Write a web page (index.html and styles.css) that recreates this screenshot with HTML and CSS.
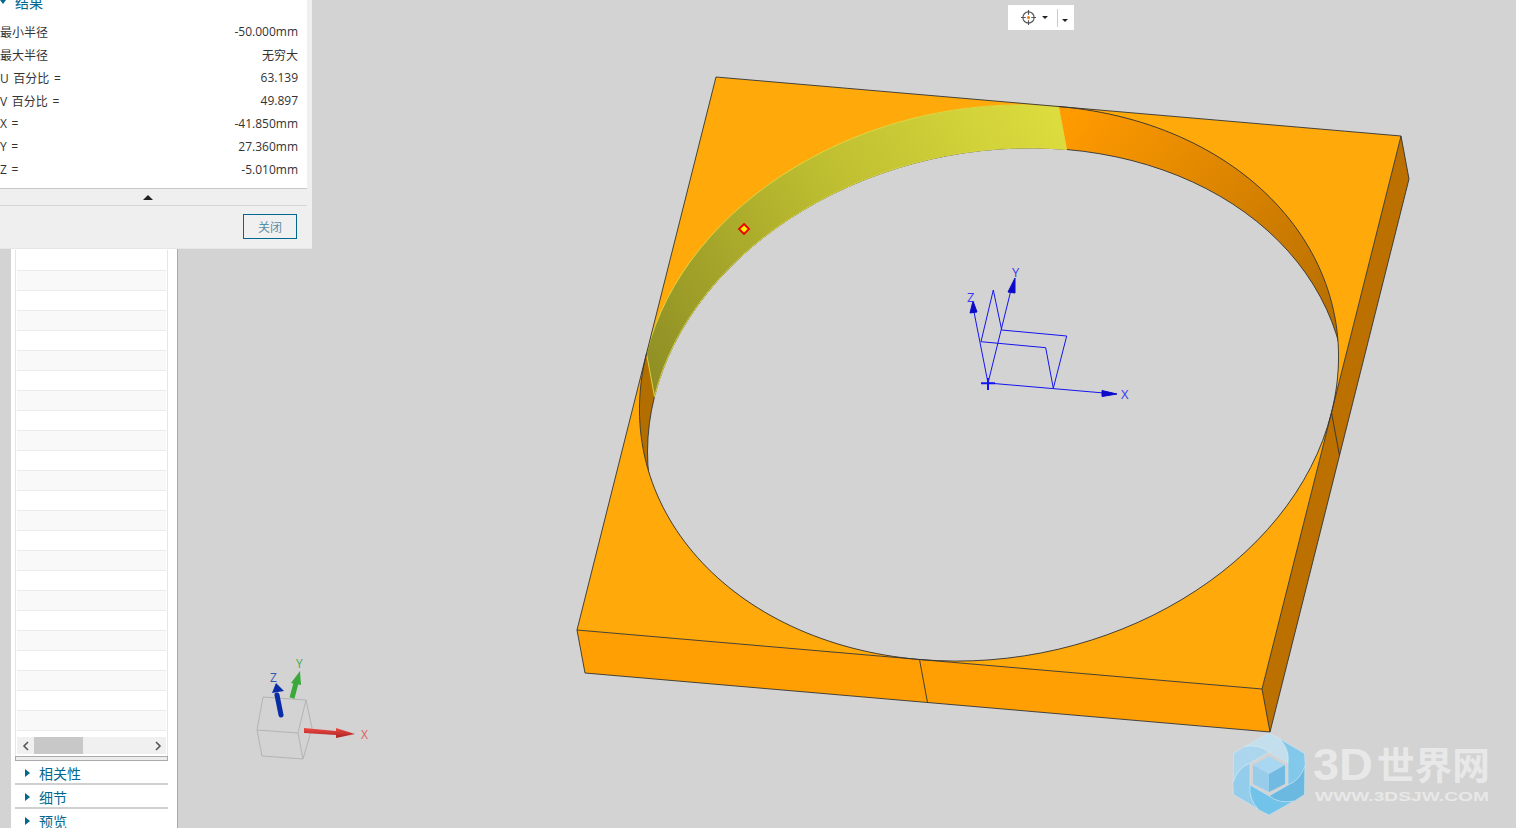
FILE: index.html
```html
<!DOCTYPE html>
<html>
<head>
<meta charset="utf-8"/>
<title>测量</title>
<link rel="stylesheet" href="styles.css">
</head>

<body>
<div class="app">

<div class="side-gutter">
<div class="side">
  <div class="list">
    <div class="rows">
      <div class="row"></div><div class="row alt"></div><div class="row"></div><div class="row alt"></div>
      <div class="row"></div><div class="row alt"></div><div class="row"></div><div class="row alt"></div>
      <div class="row"></div><div class="row alt"></div><div class="row"></div><div class="row alt"></div>
      <div class="row"></div><div class="row alt"></div><div class="row"></div><div class="row alt"></div>
      <div class="row"></div><div class="row alt"></div><div class="row"></div><div class="row alt"></div>
      <div class="row"></div><div class="row alt"></div><div class="row"></div><div class="row alt"></div>
    </div>
    <div class="hscroll">
      <svg class="chev" viewBox="0 0 8 10"><path d="M6 1 2 5l4 4"/></svg>
      <div class="track"><div class="thumb"></div></div>
      <svg class="chev" viewBox="0 0 8 10"><path d="M2 1l4 4-4 4"/></svg>
    </div>
  </div>
  <div class="sash"></div>
  <div class="section"><span class="tri-right"></span>相关性</div>
  <div class="section"><span class="tri-right"></span>细节</div>
  <div class="section"><span class="tri-right"></span>预览</div>
</div>
</div>

<div class="view">
  <div class="toolbar">
    <svg class="target" viewBox="0 0 16 16">
      <circle cx="8" cy="8" r="6"/>
      <path d="M8 0v5M8 11v5M0 8h5M11 8h5"/>
      <circle class="dot" cx="8" cy="8" r="1.6"/>
    </svg>
    <span class="tri-down"></span>
    <span class="tool-sep"></span>
    <span class="tri-down low"></span>
  </div>

  <svg class="scene" viewBox="178 0 1338 828">
    <defs>
      <linearGradient id="wallYellow" gradientUnits="userSpaceOnUse" x1="1060" y1="125" x2="650" y2="375">
        <stop offset="0" stop-color="#dcdc3e"/>
        <stop offset="0.5" stop-color="#bcbc30"/>
        <stop offset="1" stop-color="#8f8f25"/>
      </linearGradient>
      <linearGradient id="wallOrange" gradientUnits="userSpaceOnUse" x1="1065" y1="125" x2="1335" y2="330">
        <stop offset="0" stop-color="#ff9a00"/>
        <stop offset="1" stop-color="#b66e00"/>
      </linearGradient>
      <linearGradient id="redArrow" x1="0" y1="0" x2="0" y2="1">
        <stop offset="0" stop-color="#ee4a44"/>
        <stop offset="1" stop-color="#a82222"/>
      </linearGradient>
      <clipPath id="rimClip">
        <circle r="1" transform="matrix(342.5 29.5 -69.5 276.5 989 383)"/>
      </clipPath>
      <path id="blade" d="M-24.8-27 0-41 11-35.4Q21-24 19-11L0-22Q-10.3-30.2-24.8-27Z"/>
    </defs>

    <!-- plate -->
    <polygon class="face-front" points="577,630 1262,689 1270,732 585,673"/>
    <polygon class="face-right" points="1401,136 1409,179 1270,732 1262,689"/>
    <polygon class="face-top" points="716,77 1401,136 1262,689 577,630"/>

    <!-- hole: far wall shows between the two rims -->
    <circle class="wall-dark" r="1" transform="matrix(342.5 29.5 -69.5 276.5 989 383)"/>
    <g clip-path="url(#rimClip)">
      <path class="wall-orange" d="M1058.5 106.5C1247.66 122.79 1369.88 259.79 1331.5 412.5L1339.5 455.5C1377.88 302.79 1255.66 165.79 1066.5 149.5Z"/>
      <circle class="hole" r="1" transform="matrix(342.5 29.5 -69.5 276.5 997 426)"/>
      <circle class="rim-line" r="1" transform="matrix(342.5 29.5 -69.5 276.5 997 426)"/>
    </g>
    <path class="wall-yellow" d="M1058.5 106.5C869.34 90.21 684.88 200.79 646.5 353.5L654.5 396.5C692.88 243.79 877.34 133.21 1066.5 149.5Z"/>
    <path class="edge" d="M1058.5 106.5C1247.66 122.79 1369.88 259.79 1331.5 412.5C1293.12 565.21 1108.66 675.79 919.5 659.5C730.34 643.21 608.12 506.21 646.5 353.5"/>
    <path class="edge" d="M919.5 659.5 927.5 702.5M1331.5 412.5 1339.5 455.5"/>
    <path class="edge" d="M716 77 1401 136 1262 689 577 630ZM577 630 585 673 1270 732 1262 689M1401 136 1409 179 1270 732"/>

    <!-- picked point -->
    <polygon class="pick" points="744,224 749,229 744,234 739,229"/>

    <!-- sketch csys -->
    <g class="sketch">
      <path d="M988 383 1104 393M988 383 1011 290M988 383 974 312"/>
      <path d="M981 341.7 993.3 290 1001.7 330 1066.7 336 1053.3 388.3 1045.7 347.7Z"/>
      <path class="plus" d="M981 383.3h14M988 378v12"/>
      <path class="head" d="M1102 390.5 1117 394 1102 396.5ZM1008 292 1015 278 1015 293ZM970 313 973 301 977 312Z"/>
    </g>
    <text class="sketch-label" x="1121" y="399">X</text>
    <text class="sketch-label" x="1012" y="277">Y</text>
    <text class="sketch-label" x="967" y="302">Z</text>

    <!-- view triad -->
    <path class="cube" d="M257 730 263 697 306 700 312 728 303 759 262 756ZM257 730 298 733 306 700M298 733 303 759"/>
    <path class="axis-z" d="M281 715 277 695"/>
    <polygon class="axis-z-head" points="272,693 276,683 284,691"/>
    <path class="axis-y" d="M292 698 296 683"/>
    <polygon class="axis-y-head" points="291,683 300,671 301,685"/>
    <polygon points="304,728 336,731 336,728 355,734 336,738 336,735 304,733" fill="url(#redArrow)"/>
    <text class="triad x" x="361" y="739">X</text>
    <text class="triad y" x="296" y="668">Y</text>
    <text class="triad z" x="270" y="682">Z</text>

    <!-- watermark -->
    <g transform="translate(1269 774)">
      <use href="#blade" class="blade b1"/>
      <use href="#blade" class="blade b2" transform="rotate(60)"/>
      <use href="#blade" class="blade b3" transform="rotate(120)"/>
      <use href="#blade" class="blade b4" transform="rotate(180)"/>
      <use href="#blade" class="blade b5" transform="rotate(240)"/>
      <use href="#blade" class="blade b6" transform="rotate(300)"/>
      <polygon fill="#a9d6f0" points="0,-18 16,-9 0,0 -16,-9"/>
      <polygon fill="#97cdea" points="-16,-9 0,0 0,18 -16,10"/>
      <polygon fill="#71bbe3" points="16,-9 0,0 0,18 16,10"/>
    </g>
    <text class="mark-3d" x="1313" y="780" textLength="60" lengthAdjust="spacingAndGlyphs">3D</text>
    <text class="mark" x="1377" y="779" textLength="113" lengthAdjust="spacingAndGlyphs">世界网</text>
    <text class="mark-url" x="1315" y="801" textLength="174" lengthAdjust="spacingAndGlyphs">WWW.3DSJW.COM</text>
  </svg>
</div>

<div class="dialog">
  <div class="dialog-body">
    <div class="result-head"><span class="tri-open"></span>结果</div>
    <div class="result"><span>最小半径</span><span>-50.000mm</span></div>
    <div class="result"><span>最大半径</span><span>无穷大</span></div>
    <div class="result"><span>U 百分比 =</span><span>63.139</span></div>
    <div class="result"><span>V 百分比 =</span><span>49.897</span></div>
    <div class="result"><span>X =</span><span>-41.850mm</span></div>
    <div class="result"><span>Y =</span><span>27.360mm</span></div>
    <div class="result"><span>Z =</span><span>-5.010mm</span></div>
  </div>
  <div class="expander"><span class="tri-up"></span></div>
  <div class="dialog-foot"><button class="close-btn">关闭</button></div>
</div>

</div>
</body>
</html>
```
FILE: styles.css
```css
html, body {
   margin: 0;
   height: 100%;
   overflow: hidden;
}

body {
   font-family: "Open Sans", "Noto Sans CJK SC", sans-serif;
   font-size: 12px;
   color: #333;
   background-color: #d3d3d3;
}

.app {
   position: relative;
   display: flex;
   height: 828px;
   overflow: hidden;
}

/* left panel */
.side-gutter {
   width: 178px;
   flex: none;
   padding-left: 11px;
   box-sizing: border-box;
}

.side {
   height: 100%;
   box-sizing: border-box;
   padding: 250px 9px 0 4px;
   background-color: white;
   border-right: 1px solid #a9a9a9;
}

.list {
   box-sizing: border-box;
   height: 506px;
   padding: 0 1px 0 1px;
   border-right: 1px solid #e6e6e6;
   border-left: 1px solid #e6e6e6;
   width: 153px;
}

.row {
   height: 20px;
   box-sizing: border-box;
   border-bottom: 1px solid #ebebeb;
}

.row.alt {
   background-color: #f9f9f9;
}

.rows {
   padding-top: 1px;
   height: 487px;
   box-sizing: border-box;
}

.hscroll {
   display: flex;
   align-items: center;
   height: 17px;
   background-color: #f0f0f0;
}

.chev {
   flex: none;
   width: 8px;
   height: 10px;
   margin: 0 4px 0 5px;
   fill: none;
   stroke: #555;
   stroke-width: 1.6;
}

.track {
   flex: 1;
   height: 100%;
}

.thumb {
   width: 49px;
   height: 100%;
   background-color: #c8c8c8;
}

.sash {
   box-sizing: border-box;
   width: 153px;
   height: 5px;
   background-color: #ededed;
   border: 1px solid #aaa;
}

.section {
   display: flex;
   align-items: center;
   width: 153px;
   height: 24px;
   box-sizing: border-box;
   padding: 1px 0 0 10px;
   border-bottom: 2px solid #d0d0d0;
   font-size: 14px;
   color: #00678f;
}

.tri-right {
   width: 0;
   height: 0;
   margin-right: 9px;
   border-left: 5px solid #00678f;
   border-top: 4.5px solid transparent;
   border-bottom: 4.5px solid transparent;
}

/* graphics area */
.view {
   position: relative;
   flex: 1;
}

.scene {
   display: block;
   width: 100%;
   height: 100%;
}

.toolbar {
   position: absolute;
   left: 830px;
   top: 5px;
   display: flex;
   align-items: center;
   box-sizing: border-box;
   width: 66px;
   height: 25px;
   padding-left: 13px;
   background-color: white;
}

.target {
   width: 15px;
   height: 15px;
   fill: none;
   stroke: #555;
   stroke-width: 1.2;
}

.target .dot {
   fill: #ee7b11;
   stroke: none;
}

.tri-down {
   width: 0;
   height: 0;
   margin-left: 6px;
   border-top: 3px solid #222;
   border-left: 3px solid transparent;
   border-right: 3px solid transparent;
}

.tri-down.low {
   margin-left: 4px;
   margin-top: 6px;
}

.tool-sep {
   width: 1px;
   height: 18px;
   margin-left: 9px;
   background-color: #ccc;
}

.face-top { fill: #ffaa0a; }
.face-front { fill: #ff9f03; }
.face-right { fill: #bb7000; }
.wall-dark { fill: #b36e00; }
.wall-orange { fill: url(#wallOrange); }
.hole { fill: #d3d3d3; }

.rim-line {
   fill: none;
   stroke: #333;
   stroke-width: 0.9;
   vector-effect: non-scaling-stroke;
}

.wall-yellow {
   fill: url(#wallYellow);
   stroke: #dede48;
   stroke-width: 0.9;
}

.edge {
   fill: none;
   stroke: #333;
   stroke-width: 0.9;
}

.pick {
   fill: #ffee00;
   stroke: #ee0000;
   stroke-width: 1.8;
}

.sketch path {
   fill: none;
   stroke: #1414f0;
   stroke-width: 1;
}

.sketch .plus {
   stroke-width: 2;
}

.sketch .head {
   fill: #0a0ac8;
   stroke: #0a0ac8;
}

.sketch-label {
   font-size: 13px;
   fill: #3a3af0;
}

.cube {
   fill: none;
   stroke: #b4b4b4;
   stroke-width: 1;
}

.axis-z {
   stroke: #0a2ca6;
   stroke-width: 5;
   stroke-linecap: round;
}

.axis-z-head { fill: #0a2ca6; }

.axis-y {
   stroke: #3aa83a;
   stroke-width: 5;
}

.axis-y-head { fill: #3aa83a; }

.triad {
   font-size: 12px;
}

.triad.x { fill: #e0605a; }
.triad.y { fill: #4aa84a; }
.triad.z { fill: #3a52b0; }

.blade {
   stroke: #dcedf6;
   stroke-width: 0.4;
}

.b1 { fill: #c3dfee; }
.b2 { fill: #82c8ea; }
.b3 { fill: #6bb9e0; }
.b4 { fill: #72c3ea; }
.b5 { fill: #94cdeb; }
.b6 { fill: #abd6ee; }

.mark-3d {
   font-family: "Liberation Sans", sans-serif;
   font-size: 44px;
   font-weight: bold;
   fill: #e8e8e8;
}

.mark {
   font-family: "Noto Sans CJK SC", sans-serif;
   font-size: 38px;
   font-weight: bold;
   fill: #e8e8e8;
}

.mark-url {
   font-family: "Liberation Sans", sans-serif;
   font-size: 12.5px;
   font-weight: bold;
   fill: #e8e8e8;
}

/* floating dialog */
.dialog {
   position: absolute;
   left: 0;
   top: 0;
   width: 312px;
   height: 249px;
   padding-right: 5px;
   box-sizing: border-box;
   background-color: #efefef;
   border-bottom: 1px solid #e6e6e6;
}

.dialog-body {
   height: 189px;
   box-sizing: border-box;
   padding-right: 9px;
   background-color: white;
   border-bottom: 1px solid #c8c8c8;
   overflow: hidden;
}

.result-head {
   display: flex;
   align-items: center;
   height: 26px;
   margin-top: -11px;
   margin-bottom: 5px;
   font-size: 14px;
   color: #00678f;
}

.tri-open {
   width: 0;
   height: 0;
   margin-right: 9px;
   border-top: 4px solid #00678f;
   border-left: 3.5px solid transparent;
   border-right: 3.5px solid transparent;
}

.result {
   display: flex;
   justify-content: space-between;
   align-items: center;
   height: 23px;
   word-spacing: 1.5px;
}

.expander {
   display: flex;
   justify-content: center;
   align-items: center;
   height: 16px;
   padding-right: 11px;
   border-bottom: 1px solid #d6d6d6;
}

.tri-up {
   width: 0;
   height: 0;
   border-bottom: 5px solid #222;
   border-left: 5px solid transparent;
   border-right: 5px solid transparent;
}

.dialog-foot {
   display: flex;
   justify-content: flex-end;
   padding: 8px 10px 0 0;
}

.close-btn {
   width: 54px;
   height: 25px;
   padding: 0;
   font-family: "Noto Sans CJK SC", sans-serif;
   font-size: 12px;
   color: #5a8ea8;
   background-color: #f0f0f0;
   border: 1px solid #00678f;
   border-radius: 0;
}
```
